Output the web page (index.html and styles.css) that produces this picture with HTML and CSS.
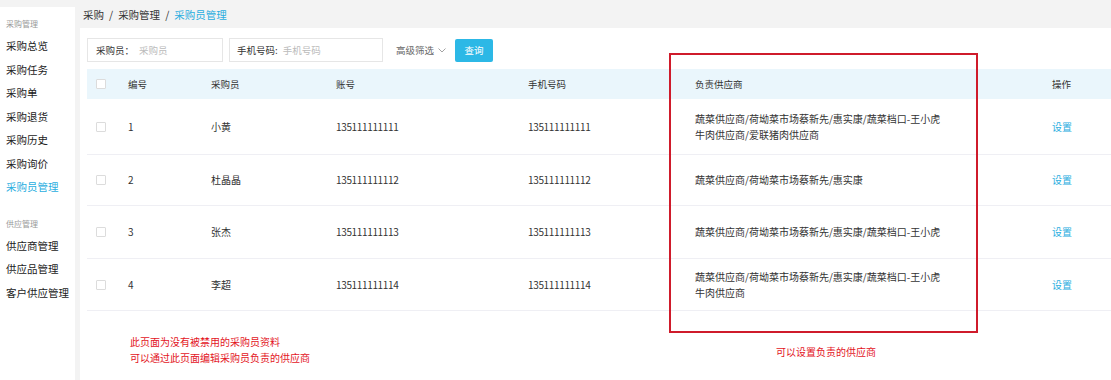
FILE: index.html
```html
<!DOCTYPE html>
<html lang="zh-CN">
<head>
  <meta charset="UTF-8">
  <title>采购员管理</title>
  <link rel="stylesheet" href="styles.css">
</head>
<body>
  <div class="layout">
    <aside class="sidebar">
      <div class="group-title">采购管理</div>
      <a class="nav-item">采购总览</a>
      <a class="nav-item">采购任务</a>
      <a class="nav-item">采购单</a>
      <a class="nav-item">采购退货</a>
      <a class="nav-item">采购历史</a>
      <a class="nav-item">采购询价</a>
      <a class="nav-item active">采购员管理</a>

      <div class="group-title second">供应管理</div>
      <a class="nav-item">供应商管理</a>
      <a class="nav-item">供应品管理</a>
      <a class="nav-item">客户供应管理</a>
    </aside>

    <main class="main">
      <div class="breadcrumb">
        <span>采购</span><span class="sep">/</span><span>采购管理</span><span class="sep">/</span><span class="current">采购员管理</span>
      </div>

      <section class="panel">
        <div class="filters">
          <label class="field field-buyer"><span class="field-label">采购员：</span><span class="placeholder">采购员</span></label>
          <label class="field field-phone"><span class="field-label">手机号码:</span><span class="placeholder">手机号码</span></label>
          <span class="advanced">高级筛选
            <svg width="8" height="5" viewBox="0 0 8 5"><path d="M0.5 0.5 L4 4 L7.5 0.5" fill="none" stroke="#999" stroke-width="0.9"/></svg>
          </span>
          <button class="btn-search">查询</button>
        </div>

        <table class="grid">
          <colgroup>
            <col style="width:41px"><col style="width:83px"><col style="width:125px"><col style="width:192px"><col style="width:167px"><col style="width:357px"><col style="width:59px">
          </colgroup>
          <thead>
            <tr><th class="cb-cell"><span class="cb"></span></th><th>编号</th><th>采购员</th><th>账号</th><th>手机号码</th><th>负责供应商</th><th>操作</th></tr>
          </thead>
          <tbody>
            <tr class="r1">
              <td class="cb-cell"><span class="cb"></span></td><td>1</td><td>小黄</td><td class="num">135111111111</td><td class="num">135111111111</td>
              <td>蔬菜供应商/荷坳菜市场蔡新先/惠实康/蔬菜档口-王小虎<br>牛肉供应商/爱联猪肉供应商</td><td><a class="link">设置</a></td>
            </tr>
            <tr class="r2">
              <td class="cb-cell"><span class="cb"></span></td><td>2</td><td>杜晶晶</td><td class="num">135111111112</td><td class="num">135111111112</td>
              <td>蔬菜供应商/荷坳菜市场蔡新先/惠实康</td><td><a class="link">设置</a></td>
            </tr>
            <tr class="r3">
              <td class="cb-cell"><span class="cb"></span></td><td>3</td><td>张杰</td><td class="num">135111111113</td><td class="num">135111111113</td>
              <td>蔬菜供应商/荷坳菜市场蔡新先/惠实康/蔬菜档口-王小虎</td><td><a class="link">设置</a></td>
            </tr>
            <tr class="r4">
              <td class="cb-cell"><span class="cb"></span></td><td>4</td><td>李超</td><td class="num">135111111114</td><td class="num">135111111114</td>
              <td>蔬菜供应商/荷坳菜市场蔡新先/惠实康/蔬菜档口-王小虎<br>牛肉供应商</td><td><a class="link">设置</a></td>
            </tr>
          </tbody>
        </table>

        <div class="notes">
          <p>此页面为没有被禁用的采购员资料</p>
          <p>可以通过此页面编辑采购员负责的供应商</p>
        </div>

        <div class="callout"></div>
        <div class="callout-note">可以设置负责的供应商</div>
      </section>
    </main>
  </div>
</body>
</html>
```

FILE: styles.css
```css
html, body { margin: 0; height: 100%; overflow: hidden; }
body { font-family: "Noto Sans CJK SC", "Noto Sans", sans-serif; background: #f3f3f3; color: #333; font-size: 10px; }

.layout { display: flex; height: 100%; }

.sidebar { width: 75px; margin-top: 7px; background: #fff; padding-top: 10px; flex-shrink: 0; }
.group-title { font-size: 8px; line-height: 14px; color: #999; padding-left: 6px; margin-bottom: 3px; }
.group-title.second { margin-top: 18px; }
.nav-item { display: block; font-size: 10.5px; line-height: 23.5px; padding-left: 6px; color: #222; white-space: nowrap; }
.nav-item.active { color: #2aaee0; }

.main { flex: 1; display: flex; flex-direction: column; }
.breadcrumb { height: 28px; line-height: 30px; padding-left: 8px; font-size: 10.5px; color: #333; box-sizing: border-box; }
.breadcrumb .sep { padding: 0 5px; }
.breadcrumb .current { color: #2aaee0; }

.panel { position: relative; flex: 1; margin-left: 5px; background: #fff; padding-top: 10px; padding-left: 7px; }

.filters { display: flex; align-items: center; height: 24px; }
.field { display: flex; align-items: center; height: 24px; box-sizing: border-box; border: 1px solid #e6e6e6; font-size: 9.5px; }
.field-buyer { width: 136px; padding-left: 8px; }
.field-phone { width: 154px; padding-left: 7px; margin-left: 6px; }
.field-label { color: #333; margin-right: 5px; }
.placeholder { color: #bbb; }
.advanced { margin-left: 13px; color: #666; font-size: 9.5px; display: flex; align-items: center; gap: 4px; }
.btn-search { margin-left: 9px; width: 38px; height: 23px; border: 0; border-radius: 2px; background: #2cb8e6; color: #fff; font-family: inherit; font-size: 9.5px; padding: 0; }

.grid { margin-top: 7px; width: 1024px; table-layout: fixed; border-collapse: collapse; }
.grid th { height: 30px; background: #eaf6fc; font-weight: normal; text-align: left; padding: 0; color: #333; font-size: 9.5px; }
.grid td { padding: 0; line-height: 16px; border-bottom: 1px solid #efeff4; color: #333; vertical-align: middle; }
.grid tr.r1 td { height: 55px; }
.grid tr.r2 td { height: 50px; }
.grid tr.r3 td { height: 52px; }
.grid tr.r4 td { height: 51px; }
.grid .cb-cell { padding-left: 9px; }
.grid .num { letter-spacing: -0.35px; }
.cb { display: block; width: 10px; height: 10px; border: 1px solid #dcdcdc; border-radius: 1px; box-sizing: border-box; background: #fff; }
.link { color: #2aaee0; }

.notes { margin-top: 23px; padding-left: 43px; color: #e3141d; }
.notes p { margin: 0; line-height: 16px; }

.callout { position: absolute; left: 589px; top: 25px; width: 309px; height: 280px; box-sizing: border-box; border: 2px solid #cf1b2b; }
.callout-note { position: absolute; left: 696px; top: 316px; line-height: 16px; color: #e3141d; }
```
